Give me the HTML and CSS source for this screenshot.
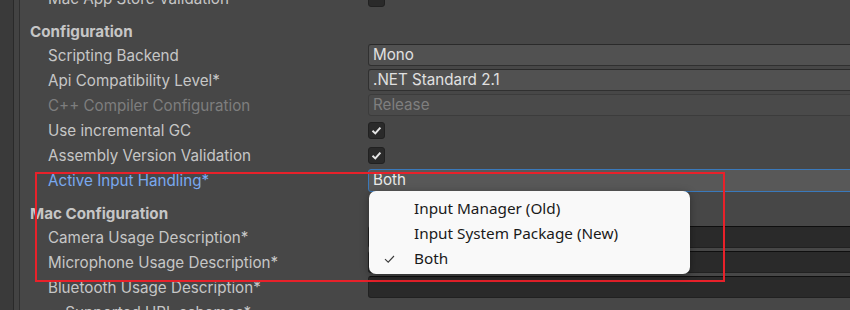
FILE: index.html
```html
<!DOCTYPE html>
<html lang="en">
<head>
    <meta charset="UTF-8">
    <title>Player Settings - Other Settings</title>
    <link rel="stylesheet" href="styles.css">
</head>
<body>

<div class="window">
    <div class="gutter"></div>
    <div class="gutter-inner"></div>

    <div class="panel">
        <div class="row clipped">
            <span class="label">Mac App Store Validation</span>
            <span class="toggle"></span>
        </div>

        <div class="section">Configuration</div>

        <div class="row">
            <span class="label">Scripting Backend</span>
            <span class="field dropdown">Mono</span>
        </div>
        <div class="row">
            <span class="label">Api Compatibility Level*</span>
            <span class="field dropdown">.NET Standard 2.1</span>
        </div>
        <div class="row">
            <span class="label disabled">C++ Compiler Configuration</span>
            <span class="field dropdown off">Release</span>
        </div>
        <div class="row">
            <span class="label">Use incremental GC</span>
            <span class="toggle checked">
                <svg width="17" height="17" viewBox="0 0 17 17"><path d="M4.5 8.8 L7.3 11.4 L12.4 5.6" fill="none" stroke="#e4e4e4" stroke-width="2"/></svg>
            </span>
        </div>
        <div class="row">
            <span class="label">Assembly Version Validation</span>
            <span class="toggle checked">
                <svg width="17" height="17" viewBox="0 0 17 17"><path d="M4.5 8.8 L7.3 11.4 L12.4 5.6" fill="none" stroke="#e4e4e4" stroke-width="2"/></svg>
            </span>
        </div>
        <div class="row">
            <span class="label active">Active Input Handling*</span>
            <span class="field dropdown focus">Both</span>
        </div>

        <div class="section">Mac Configuration</div>

        <div class="row">
            <span class="label">Camera Usage Description*</span>
            <span class="field text"></span>
        </div>
        <div class="row">
            <span class="label">Microphone Usage Description*</span>
            <span class="field text"></span>
        </div>
        <div class="row">
            <span class="label">Bluetooth Usage Description*</span>
            <span class="field text"></span>
        </div>
        <div class="row">
            <span class="label foldout"><span class="arrow">&#9654;</span>Supported URL schemes*</span>
        </div>
    </div>
</div>

<!-- highlight drawn over the inspector -->
<div class="highlight"></div>

<!-- open dropdown menu -->
<div class="menu">
    <div class="menu-item">Input Manager (Old)</div>
    <div class="menu-item">Input System Package (New)</div>
    <div class="menu-item selected">
        <svg class="tick" width="12" height="10" viewBox="0 0 12 10"><path d="M1 5.2 L4.2 8.2 L10 2" fill="none" stroke="#3a3a3a" stroke-width="1.1"/></svg>
        Both
    </div>
</div>

</body>
</html>
```

FILE: styles.css
```css
body {
    margin: 0;
    padding: 0;
    background-color: #474747;
    font-family: Inter, 'Noto Sans', sans-serif;
    font-size: 15.2px;
    color: #c6c6c6;
    overflow: hidden;
    width: 850px;
    height: 310px;
    position: relative;
}
.window {
    display: flex;
    height: 310px;
}
.gutter {
    width: 13px;
    background-color: #3a3a3a;
    border-right: 1px solid #2a2a2a;
}
.gutter-inner {
    width: 5px;
    background-color: #434343;
    border-right: 1px solid #303030;
}
.panel {
    flex: 1;
    padding-left: 10px;
    margin-top: -13px;
}
.section {
    font-weight: bold;
    padding-top: 8px;
    height: 24px;
    line-height: 24px;
}
.row {
    display: flex;
    align-items: center;
    height: 22px;
    margin-bottom: 3px;
}
.label {
    width: 320px;
    padding-left: 18px;
    flex-shrink: 0;
    white-space: nowrap;
}
.label.disabled {
    color: #7e7e7e;
}
.label.active {
    color: #7aa9ef;
}
.foldout .arrow {
    font-size: 8px;
    color: #8a8a8a;
    margin: 0 8px 0 2px;
    vertical-align: 2px;
}
.field {
    flex: 1;
    height: 20px;
    line-height: 20px;
    padding-left: 4px;
    margin-right: -10px;
    border-radius: 3px;
    white-space: nowrap;
}
.dropdown {
    background-color: #515151;
    border: 1px solid #303030;
    border-top-color: #2a2a2a;
    color: #e0e0e0;
}
.dropdown.off {
    background-color: #4a4a4a;
    border-color: #3c3c3c;
    color: #7f7f7f;
}
.dropdown.focus {
    background-color: #585858;
    border-color: #3a79bb;
    height: 21px;
    color: #e8e8e8;
}
.text {
    background-color: #2a2a2a;
    border: 1px solid #212121;
    border-top-color: #0f0f0f;
}
.toggle {
    width: 15px;
    height: 15px;
    margin-top: 1px;
    background-color: #2a2a2a;
    border: 1px solid #212121;
    border-radius: 3px;
    position: relative;
}
.toggle svg {
    position: absolute;
    left: -1px;
    top: -1px;
}
.highlight {
    position: absolute;
    left: 35px;
    top: 172px;
    width: 686px;
    height: 106px;
    border: 2px solid #e8212a;
}
.menu {
    position: absolute;
    left: 369px;
    top: 191px;
    width: 321px;
    height: 83px;
    box-sizing: border-box;
    padding-top: 5px;
    background-color: #f9f9f9;
    border-radius: 7px;
    box-shadow: 0 2px 8px rgba(0, 0, 0, 0.35);
    font-family: 'Noto Sans', 'Open Sans', sans-serif;
    font-size: 15.3px;
    color: #1a1a1a;
}
.menu-item {
    height: 25px;
    line-height: 25px;
    padding-left: 45px;
    position: relative;
}
.menu-item .tick {
    position: absolute;
    left: 15px;
    top: 8px;
}
```
